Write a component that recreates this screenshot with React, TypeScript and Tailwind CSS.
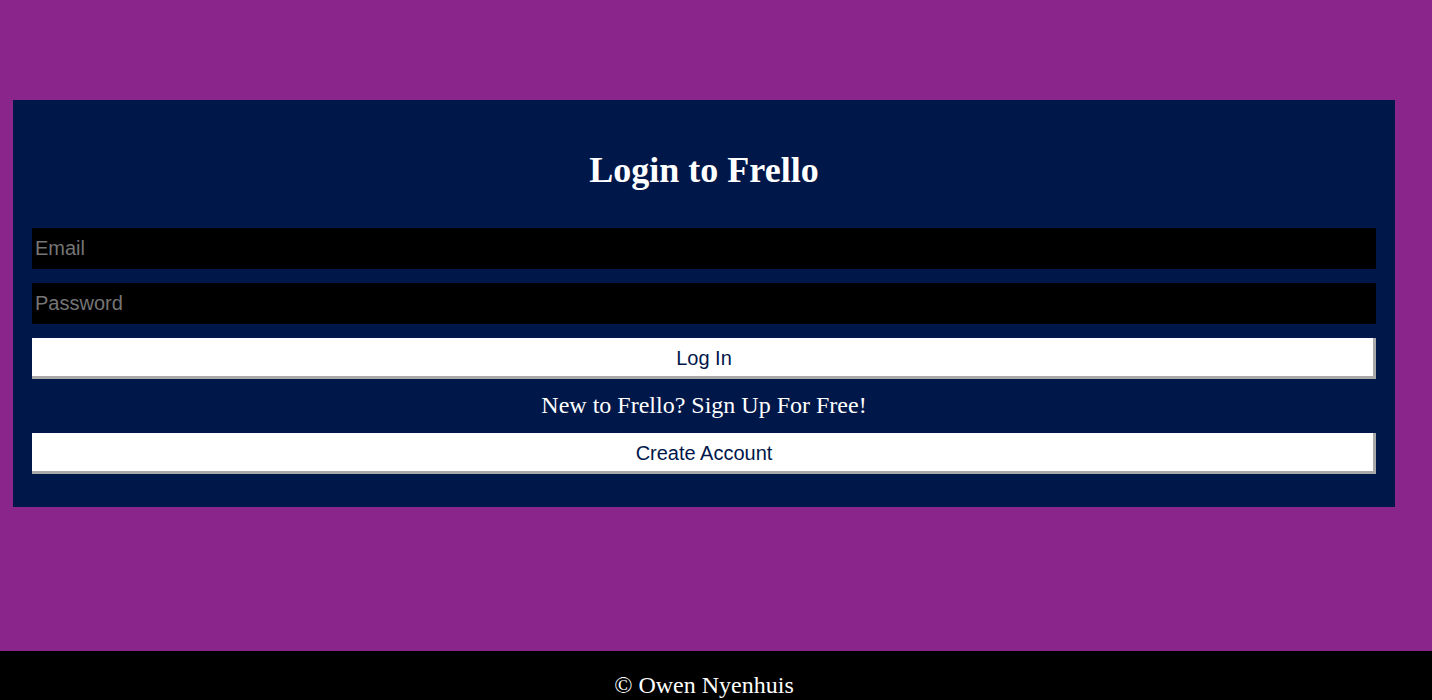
import React from 'react';

const App: React.FC = () => {
  return (
    <div className="min-h-screen bg-[#8a258c] font-['Liberation_Serif',serif]">
      <main className="h-[651px] pt-[100px] pl-[13px] pr-[37px]">
        <div className="bg-[#00174a] px-[19px] pt-[50px] pb-[33px] flex flex-col">
          <h2 className="text-white text-[36px] font-bold text-center leading-[41px] mb-[37px]">
            Login to Frello
          </h2>
          <input
            type="email"
            placeholder="Email"
            className="h-[41px] bg-black px-[3px] text-[20px] text-white placeholder:text-[#757575] font-['Liberation_Sans',sans-serif] outline-none"
          />
          <input
            type="password"
            placeholder="Password"
            className="mt-[14px] h-[41px] bg-black px-[3px] text-[20px] text-white placeholder:text-[#757575] font-['Liberation_Sans',sans-serif] outline-none"
          />
          <button className="mt-[14px] h-[41px] bg-white pb-[2px] text-[#00174a] text-[20px] font-['Liberation_Sans',sans-serif] shadow-[inset_-3px_-3px_0_#a9a9a9]">
            Log In
          </button>
          <p className="text-white text-[24px] text-center leading-[28px] mt-[12px] mb-[14px]">
            New to Frello? Sign Up For Free!
          </p>
          <button className="h-[41px] bg-white pb-[2px] text-[#00174a] text-[20px] font-['Liberation_Sans',sans-serif] shadow-[inset_-3px_-3px_0_#a9a9a9]">
            Create Account
          </button>
        </div>
      </main>
      <footer className="bg-black text-white text-[24px] text-center pt-[20px] pb-[20px] pr-[24px] leading-[28px]">
        © Owen Nyenhuis
      </footer>
    </div>
  );
};

export default App;
